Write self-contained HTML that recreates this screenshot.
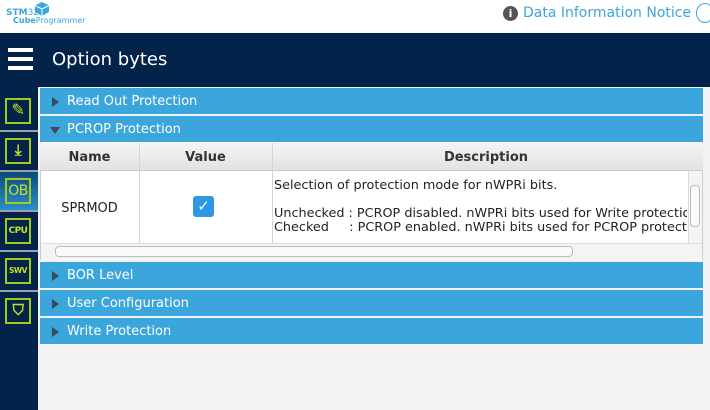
<!DOCTYPE html>
<html><head><style>
*{margin:0;padding:0;box-sizing:border-box}
body{width:710px;height:410px;overflow:hidden;background:#fff;font-family:"DejaVu Sans","Liberation Sans",sans-serif;position:relative}
.abs{position:absolute}
.sec{position:absolute;left:40px;width:663px;height:26px;background:#3ba6dc;color:#fff;font-size:13px;line-height:28px;padding-left:27px}
.sec:before{content:"";position:absolute;left:12px;top:9px;border-left:7px solid #3d4a55;border-top:5px solid transparent;border-bottom:5px solid transparent}
.sec.open:before{left:10px;top:11px;border-top:7px solid #3d4a55;border-left:5px solid transparent;border-right:5px solid transparent;border-bottom:0}
.ic{position:absolute;left:5px;width:26px;height:26px;border:2px solid #a5c81f;color:#c5e21f;font-size:10px;font-weight:bold;text-align:center;line-height:22px;overflow:hidden;letter-spacing:-0.5px}
.sep{position:absolute;left:0;width:38px;height:2px;background:#9aa3ad}
</style></head><body>
<div class="abs" style="left:6px;top:9px;font-size:9px;font-weight:bold;color:#3ba6dc;line-height:8px">STM<span style="font-weight:normal">32</span></div>
<svg class="abs" style="left:34px;top:1px" width="16" height="16" viewBox="0 0 16 16"><path d="M8 1L15 4.5V11L8 15L1 11V4.5Z" fill="#3ba6dc"/><path d="M1 4.5L8 8L15 4.5M8 8V15" stroke="#fff" stroke-width="1" fill="none"/></svg>
<div class="abs" style="left:13px;top:16px;font-size:8px;color:#3ba6dc;line-height:9px"><b>Cube</b>Programmer</div>
<div class="abs" style="left:503px;top:6px;width:15px;height:15px;border-radius:50%;background:#555;color:#fff;font-size:11px;font-weight:bold;text-align:center;line-height:15px">i</div>
<div class="abs" style="left:523px;top:5px;font-size:14px;color:#3ba6dc">Data Information Notice</div>
<div class="abs" style="left:696px;top:3px;width:18px;height:20px;border:1px solid #3ba6dc;border-radius:50%"></div>
<div class="abs" style="left:0;top:33px;width:710px;height:54px;background:#03234b"></div>
<div class="abs" style="left:8px;top:48px;width:25px;height:4px;background:#fff"></div>
<div class="abs" style="left:8px;top:57px;width:25px;height:4px;background:#fff"></div>
<div class="abs" style="left:8px;top:66px;width:25px;height:4px;background:#fff"></div>
<div class="abs" style="left:52px;top:49px;font-size:18px;color:#fff">Option bytes</div>
<div class="abs" style="left:0;top:87px;width:38px;height:323px;background:#03234b"></div>
<div class="abs" style="left:38px;top:87px;width:672px;height:323px;background:#f2f2f2"></div>
<div class="ic" style="top:98px;font-size:16px;line-height:20px">✎</div>
<div class="sep" style="top:130px"></div>
<div class="ic" style="top:138px;font-size:15px;line-height:20px">⤓</div>
<div class="sep" style="top:170px"></div>
<div class="abs" style="left:0;top:172px;width:38px;height:38px;background:linear-gradient(#0b4a7d,#2a8fc8)"></div>
<div class="ic" style="top:178px;font-size:14px;font-weight:normal">OB</div>
<div class="sep" style="top:210px"></div>
<div class="ic" style="top:218px;font-size:9px">CPU</div>
<div class="sep" style="top:250px"></div>
<div class="ic" style="top:258px;font-size:7.5px">SWV</div>
<div class="sep" style="top:290px"></div>
<div class="ic" style="top:298px;font-size:15px;line-height:20px">⛉</div>
<div class="sec" style="top:88px">Read Out Protection</div>
<div class="sec open" style="top:116px">PCROP Protection</div>
<div class="abs" style="left:40px;top:142px;width:663px;height:118px;background:#fff;border-left:1px solid #ccc;border-right:1px solid #ccc"></div>
<div class="abs" style="left:40px;top:143px;width:663px;height:28px;background:linear-gradient(#f4f4f4,#e2e2e2);border-bottom:1px solid #ccc"></div>
<div class="abs" style="left:139px;top:143px;width:1px;height:100px;background:#d4d4d4"></div>
<div class="abs" style="left:272px;top:143px;width:1px;height:100px;background:#d4d4d4"></div>
<div class="abs" style="left:40px;top:150px;width:99px;text-align:center;font-size:13px;font-weight:bold;color:#333">Name</div>
<div class="abs" style="left:139px;top:150px;width:133px;text-align:center;font-size:13px;font-weight:bold;color:#333">Value</div>
<div class="abs" style="left:272px;top:150px;width:428px;text-align:center;font-size:13px;font-weight:bold;color:#333">Description</div>
<div class="abs" style="left:40px;top:201px;width:99px;text-align:center;font-size:13px;color:#222">SPRMOD</div>
<div class="abs" style="left:193px;top:196px;width:21px;height:21px;border-radius:3px;background:#2f98e4;color:#fff;font-size:15px;text-align:center;line-height:21px">✓</div>
<div class="abs" style="left:274px;top:179px;width:413px;height:64px;overflow:hidden;font-size:12.8px;color:#222;line-height:14px;white-space:pre">Selection of protection mode for nWPRi bits.

Unchecked : PCROP disabled. nWPRi bits used for Write protection
Checked     : PCROP enabled. nWPRi bits used for PCROP protection</div>
<div class="abs" style="left:688px;top:171px;width:14px;height:72px;background:#f4f4f4;border-left:1px solid #ddd"></div>
<div class="abs" style="left:690px;top:185px;width:10px;height:42px;border:1px solid #bbb;border-radius:4px;background:#fafafa"></div>
<div class="abs" style="left:41px;top:243px;width:661px;height:16px;background:#f4f4f4;border-top:1px solid #ddd"></div>
<div class="abs" style="left:55px;top:246px;width:518px;height:11px;border:1px solid #bbb;border-radius:4px;background:#fafafa"></div>
<div class="sec" style="top:262px">BOR Level</div>
<div class="sec" style="top:290px">User Configuration</div>
<div class="sec" style="top:318px">Write Protection</div>
</body></html>
